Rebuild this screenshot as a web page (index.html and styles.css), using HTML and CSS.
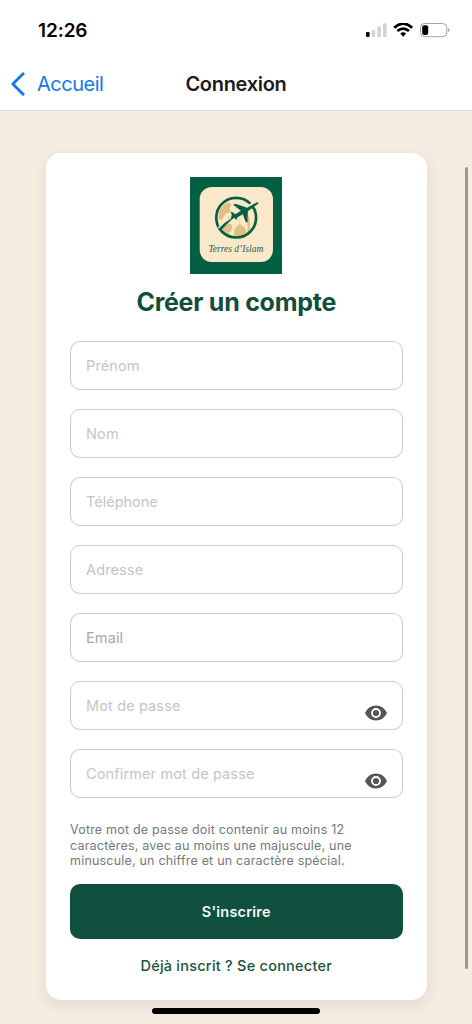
FILE: index.html
```html
<!DOCTYPE html>
<html lang="fr">
<head>
<meta charset="utf-8">
<title>Connexion</title>
<link rel="stylesheet" href="styles.css">
</head>
<body>
<div class="screen">
  <header class="top">
    <div class="status">
      <span class="time">12:26</span>
      <svg class="indicators" width="84" height="16" viewBox="0 0 84 16">
        <rect x="0" y="9" width="3.6" height="5" rx="1.2" fill="#000"/>
        <rect x="5.6" y="7" width="3.6" height="7" rx="1" fill="#d2d2d2"/>
        <rect x="11.3" y="3.6" width="3.6" height="10.4" rx="1" fill="#d2d2d2"/>
        <rect x="17" y="0.3" width="3.6" height="13.7" rx="1" fill="#d2d2d2"/>
        <g fill="none" stroke="#000" stroke-width="2.7">
          <path d="M28.2 4.7Q37.2-3.3 46.2 4.7"/>
          <path d="M31.4 8.1Q37.2 3 43 8.1"/>
        </g>
        <path d="M34.3 10.5Q37.2 8.2 40.1 10.5L37.2 13.7Z"/>
        <rect x="54.5" y="0.5" width="26.3" height="13.2" rx="4" fill="#fff" stroke="#a3a3a3"/>
        <rect x="56.2" y="2.2" width="6" height="9.8" rx="2" fill="#000"/>
        <path d="M82.1 5.1Q83.7 5.7 83.7 7.1T82.1 9.1Z" fill="#a3a3a3"/>
      </svg>
    </div>
    <nav class="nav">
      <a class="back"><svg width="14" height="24" viewBox="0 0 14 24"><path d="M12.1 1.8 1.9 12l10.2 10.2" fill="none" stroke="#147ae8" stroke-width="2.9" stroke-linecap="round" stroke-linejoin="round"/></svg><span>Accueil</span></a>
      <h1 class="title">Connexion</h1>
    </nav>
  </header>
  <main class="content">
    <form class="card">
      <svg class="logo" viewBox="32 21 275 291" preserveAspectRatio="none">
        <rect x="32" y="21" width="275" height="291" fill="#045f43"/>
        <rect x="61" y="51" width="219" height="225" rx="36" fill="#f9e8c9"/>
        <g fill="#dfc283">
          <path d="M119 126Q128 104 148 96L156 105 150 114 154 125 140 130 133 139 128 149 117 148Z"/>
          <path d="M125 169 143 158 158 164 158 177 150 188 151 199Q131 190 125 169Z"/>
          <path d="M164 197V182Q165 172 181 162 199 172 199 182V190Q184 202 164 197Z"/>
          <path d="M180 150h2v16h-2zM204 149l3-14 4 14v32l-7 8z"/>
          <path d="M147 140l17 2-7 10-14 3z"/>
        </g>
        <circle cx="170" cy="143" r="59.5" fill="none" stroke="#045f43" stroke-width="8"/>
        <path d="M119 177Q136 158 164 143" fill="none" stroke="#f9e8c9" stroke-width="11"/>
        <path d="M117 178Q134 157 162 143Q142 160 124 181Z" fill="#045f43" stroke="#045f43" stroke-width="2"/>
        <path d="M198 117 238 93" fill="none" stroke="#f9e8c9" stroke-width="13"/>
        <path d="M154 147 157 134 153 126 159 127 168 133 184 122 161 104 168 101 203 113 230 98Q238 95 236 101L205 124 204 158 198 155 190 133 174 142 170 151 166 144Z" fill="#045f43"/>
        <text x="87" y="245" class="logo-text" textLength="164" lengthAdjust="spacingAndGlyphs">Terres d’Islam</text>
      </svg>
      <h2 class="heading">Créer un compte</h2>
      <div class="fields">
        <div class="field">Prénom</div>
        <div class="field">Nom</div>
        <div class="field tel">Téléphone</div>
        <div class="field">Adresse</div>
        <div class="field email">Email</div>
        <div class="field"><span>Mot de passe</span><svg class="eye" viewBox="0 0 22 16"><path d="M11 0.5C6 0.5 2 3.6 0 8c2 4.4 6 7.5 11 7.5S20 12.4 22 8C20 3.6 16 .5 11 .5Zm0 12.4a4.9 4.9 0 1 1 0-9.8 4.9 4.9 0 0 1 0 9.8Zm0-1.8a3.1 3.1 0 1 0 0-6.2 3.1 3.1 0 0 0 0 6.2Z"/></svg></div>
        <div class="field"><span>Confirmer mot de passe</span><svg class="eye" viewBox="0 0 22 16"><path d="M11 0.5C6 0.5 2 3.6 0 8c2 4.4 6 7.5 11 7.5S20 12.4 22 8C20 3.6 16 .5 11 .5Zm0 12.4a4.9 4.9 0 1 1 0-9.8 4.9 4.9 0 0 1 0 9.8Zm0-1.8a3.1 3.1 0 1 0 0-6.2 3.1 3.1 0 0 0 0 6.2Z"/></svg></div>
      </div>
      <p class="hint">Votre mot de passe doit contenir au moins 12<br>caractères, avec au moins une majuscule, une<br>minuscule, un chiffre et un caractère spécial.</p>
      <button class="submit" type="button">S'inscrire</button>
      <a class="login">Déjà inscrit ? Se connecter</a>
    </form>
  </main>
  <div class="scrollbar"></div>
  <div class="home-bar"></div>
</div>
</body>
</html>
```

FILE: styles.css
```css
* { box-sizing: border-box; }
body { margin: 0; font-family: Inter, "Liberation Sans", sans-serif; }
.screen { position: relative; width: 472px; height: 1024px; overflow: hidden; background: #f5ece2; }
.top { height: 111px; background: #fff; border-bottom: 1px solid #dcd9d6; }
.status { display: flex; justify-content: space-between; height: 60px; padding: 19px 22px 0 38px; }
.time { font-size: 19px; line-height: 24px; font-weight: 600; letter-spacing: -.1px; color: #000; }
.indicators { margin-top: 4px; }
.nav { display: grid; grid-template-columns: 1fr auto 1fr; align-items: center; height: 48px; }
.back { display: flex; align-items: center; gap: 12px; padding-left: 11px; font-size: 20px; line-height: 24px; letter-spacing: -.5px; color: #147ae8; }
.title { margin: 0; font-size: 20px; line-height: 24px; font-weight: 600; letter-spacing: -.3px; color: #1c1c1e; }
.content { padding: 41.5px 45px 0 45.5px; }
.card { display: flex; flex-direction: column; height: 847px; padding: 24.5px 24.5px 0; border-radius: 15px; background: #fff; box-shadow: 0 5px 15px rgba(60, 65, 35, .11); }
.logo { flex: none; align-self: center; width: 92px; height: 97px; }
.logo-text { font: italic 28px "Liberation Serif", serif; fill: #345947; }
.heading { margin: 12px 0 0; height: 32px; font-size: 25px; line-height: 32px; font-weight: 700; letter-spacing: -.25px; text-align: center; color: #134e3c; }
.fields { display: grid; gap: 18.5px; margin-top: 22.5px; }
.field { display: flex; align-items: center; justify-content: space-between; height: 49.5px; padding: 0 15px; border: 1.3px solid #cacaca; border-radius: 10px; font-size: 14.5px; letter-spacing: .13px; color: #c5c5c7; }
.tel { letter-spacing: 0; }
.email { color: #a7a7a9; }
.eye { width: 22px; height: 16px; margin-top: 14.5px; fill: #555; }
.hint { margin: 24px 0 0; font-size: 12.5px; line-height: 15.5px; letter-spacing: .2px; white-space: nowrap; color: #737982; }
.submit { flex: none; height: 54.5px; margin: 15.5px 0 0; padding: 1px 0 0; border: 0; border-radius: 10px; background: #11503e; color: #f0fbf6; font: 600 14.5px/54px Inter, sans-serif; letter-spacing: .2px; }
.login { margin-top: 17.5px; font-size: 14.5px; line-height: 20px; font-weight: 500; letter-spacing: .24px; text-align: center; color: #1b513e; }
.scrollbar { position: absolute; left: 464.5px; top: 167px; width: 3.5px; height: 802px; border-radius: 2px; background: #9e9691; }
.home-bar { position: absolute; left: 152px; top: 1008px; width: 168px; height: 6px; border-radius: 3px; background: #000; }
```
